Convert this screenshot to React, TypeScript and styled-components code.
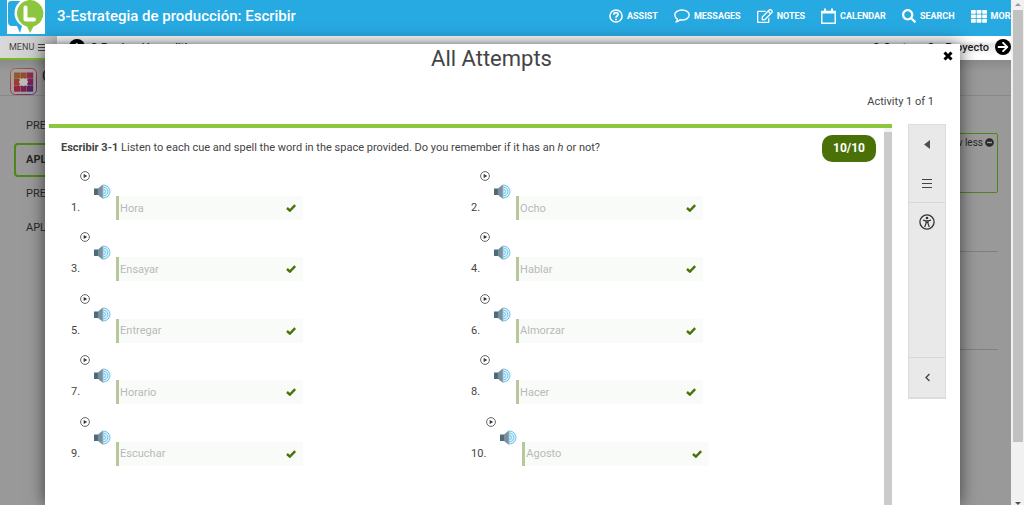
import React from "react";
import styled, { createGlobalStyle } from "styled-components";
import { FaChevronLeft, FaRegEdit, FaSearch, FaArrowLeft, FaArrowRight, FaMinusCircle } from "react-icons/fa";

const Global = createGlobalStyle`
  * { box-sizing: border-box; }
  body { margin: 0; font-family: Roboto, "Liberation Sans", sans-serif; color: #444; overflow: hidden; }
  button { font: inherit; color: inherit; background: none; border: 0; padding: 0; display: flex; align-items: center; cursor: pointer; }
  a { color: inherit; text-decoration: none; }
  h1, h2, p { margin: 0; font-weight: 400; }
  ul, ol { list-style: none; margin: 0; padding: 0; }
  svg { display: block; flex-shrink: 0; }
`;

const Shell = styled.div`
  display: flex;
  height: 100vh;
`;

const Page = styled.div`
  position: relative;
  flex: 1;
  min-width: 0;
  display: flex;
  flex-direction: column;
  overflow: hidden;
`;

const ScrollTrack = styled.div`
  width: 13px;
  background: #f1f1f1;
  display: flex;
  flex-direction: column;
  align-items: center;
  justify-content: space-between;
  padding: 3px 0 0;
`;

const ScrollThumb = styled.div`
  width: 10px;
  height: 86%;
  margin: 4px 0 auto;
  background: #c1c1c1;
`;

const TopBar = styled.header`
  height: 36px;
  flex-shrink: 0;
  background: #27a9e1;
  color: #fff;
  display: flex;
  align-items: flex-start;
  padding-left: 7px;
`;

const CourseTitle = styled.h1`
  font-size: 15px;
  font-weight: 400;
  line-height: 32px;
  margin-left: 12px;
  flex: 1;
  white-space: nowrap;
  && { font-weight: 500; }
`;

const Tools = styled.nav`
  display: flex;
  gap: 16px;
  width: 402px;
  overflow: hidden;
`;

const Tool = styled.button`
  height: 32px;
  gap: 4px;
  flex-shrink: 0;
  && { font-size: 9px; font-weight: 700; }
`;

const SubBar = styled.div`
  height: 24px;
  flex-shrink: 0;
  background: linear-gradient(#fff, #fff 20%, #e4e4e4 36%, #fff 80%);
  display: flex;
  color: #222;
`;

const MenuButton = styled.button`
  width: 57px;
  flex-shrink: 0;
  && {
    background: linear-gradient(90deg, #dadada, #c4c4c4);
    padding-left: 9px;
    gap: 4px;
    font-size: 9px;
    border-bottom: 2px solid #76b82a;
    color: #444;
  }
`;

const Steps = styled.div`
  flex: 1;
  display: flex;
  align-items: center;
  justify-content: space-between;
  padding: 0 0 2px 12px;
`;

const Step = styled.a`
  display: flex;
  align-items: center;
  gap: 6px;
  font-size: 11px;
  font-weight: 500;
`;

const Disc = styled.span`
  width: 16px;
  height: 16px;
  border-radius: 50%;
  background: #000;
  color: #fff;
  display: flex;
  align-items: center;
  justify-content: center;
`;

const Backdrop = styled.div`
  flex: 1;
  background: linear-gradient(#8a8a8a, #999 12px);
  color: #282828;
`;

const CourseRow = styled.div`
  display: flex;
  height: 36px;
  gap: 5px;
  padding: 8px 0 0 10px;
  font-size: 14px;
  font-weight: 500;
  border-bottom: 1px solid #898989;
`;

const Columns = styled.div`
  display: flex;
  justify-content: space-between;
`;

const SideList = styled.ul`
  width: 180px;
  padding: 13px 0 0 14px;
  font-size: 11px;
`;

const SideItem = styled.li<{ $active?: boolean }>`
  height: 34px;
  line-height: 30px;
  padding-left: 10px;
  border: 2px solid ${(p) => (p.$active ? "#4f8519" : "transparent")};
  border-radius: 4px;
  font-weight: ${(p) => (p.$active ? 700 : 400)};
`;

const Detail = styled.section`
  width: 500px;
  padding: 37px 13px 0 0;
`;

const Card = styled.div`
  height: 60px;
  border: 1px solid #4f8519;
  border-radius: 2px;
  display: flex;
  justify-content: flex-end;
  padding: 3px;
  font-size: 10px;
`;

const LessButton = styled.button`
  && { gap: 2px; align-self: flex-start; }
`;

const Rule = styled.hr<{ $gap: number }>`
  border: 0;
  border-top: 1px solid #808080;
  margin: ${(p) => p.$gap}px 0 0;
`;

const Modal = styled.div`
  position: absolute;
  top: 44px;
  right: 51px;
  bottom: 0;
  left: 45px;
  background: #fff;
  box-shadow: 0 0 16px rgba(0, 0, 0, 0.6);
  padding: 0 14px 0 4px;
  display: flex;
  flex-direction: column;
`;

const ModalHead = styled.div`
  height: 80px;
  flex-shrink: 0;
  padding-right: 12px;
`;

const ModalTitle = styled.h2`
  font-size: 22px;
  line-height: 30px;
  text-align: center;
`;

const Counter = styled.p`
  font-size: 11px;
  line-height: 16px;
  text-align: right;
  margin-top: 20px;
`;

const CloseButton = styled.button`
  position: absolute;
  top: 7px;
  right: 7px;
  && { color: #000; }
`;

const ModalBody = styled.div`
  flex: 1;
  min-height: 0;
  display: flex;
  gap: 16px;
`;

const Sheet = styled.div`
  flex: 1;
  min-width: 0;
  border-top: 4px solid #8cc63f;
  display: flex;
  align-items: stretch;
`;

const Activity = styled.div`
  flex: 1;
  min-width: 0;
  padding: 7px 8px 0 12px;
`;

const InnerScroll = styled.div`
  width: 8px;
  border-top: 4px solid #f4f4f4;
  background: #cbcbcb;
`;

const Intro = styled.div`
  display: flex;
  justify-content: space-between;
  font-size: 11px;
  line-height: 25px;
`;

const Score = styled.span`
  background: #4a7107;
  color: #fff;
  font-size: 12px;
  font-weight: 700;
  line-height: 27px;
  height: 27px;
  width: 54px;
  text-align: center;
  border-radius: 10px;
`;

const Questions = styled.ol`
  display: grid;
  grid-template-columns: 400px 1fr;
  grid-template-rows: repeat(5, 1fr);
  height: 316px;
  padding: 9px 0 0 10px;
`;

const Question = styled.li`
  display: flex;
  align-items: flex-start;
  font-size: 11px;
`;

const Num = styled.label`
  line-height: 16px;
  margin-top: 29px;
`;

const PlayButton = styled.button``;

const SoundButton = styled.button`
  && { margin: 13px 5px 0 4px; }
`;

const Field = styled.div`
  margin-top: 25px;
  width: 187px;
  height: 24px;
  background: #f9fbf8;
  border-left: 3px solid #b5c99a;
  display: flex;
  align-items: center;
  padding: 0 7px 0 1px;
`;

const Answer = styled.input`
  flex: 1;
  min-width: 0;
  border: 0;
  padding: 0;
  background: none;
  font: 11px Roboto, "Liberation Sans", sans-serif;
  color: #b9b9b9;
`;

const Rail = styled.aside`
  align-self: flex-start;
  width: 38px;
  height: 275px;
  background: #e9e9e9;
  border: 1px solid #dcdcdc;
  border-bottom-width: 2px;
  display: flex;
  flex-direction: column;
`;

const RailButton = styled.button<{ $h: number; $line?: boolean; $push?: boolean }>`
  && {
    justify-content: center;
    height: ${(p) => p.$h}px;
    margin-top: ${(p) => (p.$push ? "auto" : "0")};
    border-top: 1px solid ${(p) => (p.$line ? "#d6d6d6" : "transparent")};
  }
`;

const Logo = () => (
  <svg width="38" height="34" viewBox="0 0 38 34">
    <path d="M0 0h38v34H0z" fill="#fff" />
    <path d="M4 1h18v25h-7l-2 7-3-7H5q-4 0-4-4V4q0-3 3-3z" fill="#27a9e1" />
    <circle cx="22.500" cy="13" r="15" fill="#fff" />
    <path d="M22.500 0a13.500 13.500 0 0 1 4 26.500L23 33l-3-6.500A13.500 13.500 0 0 1 22.500 0z" fill="#8cc63f" />
    <path d="M18.500 7.500v12h8.500" fill="none" stroke="#fff" strokeWidth="4" strokeLinejoin="round" strokeLinecap="round" />
  </svg>
);

const Help = () => (
  <svg width="14" height="14" viewBox="0 0 14 14" fill="none" stroke="#fff" strokeWidth="1.500">
    <circle cx="7" cy="7" r="6.100" />
    <path d="M4.900 5.600C5 3 9.200 3.100 9.100 5.500 9 7 7 6.900 7 8.700M7 9.700v1.500" strokeWidth="1.800" />
  </svg>
);

const Bubble = () => (
  <svg width="16" height="14" viewBox="0 0 16 14" fill="none" stroke="#fff" strokeWidth="1.400" strokeLinejoin="round">
    <path d="M8 1c4 0 7.200 2.200 7.200 5S12 11 8 11q-1 0-2-.2Q4.500 12.600 2 13q1.400-1.300 1.400-3Q.8 8.500.8 6C.8 3.200 4 1 8 1z" />
  </svg>
);

const Calendar = () => (
  <svg width="15" height="16" viewBox="0 0 15 16" fill="none" stroke="#fff">
    <path d="M.8 3.500h13.400v11.700H.8z" strokeWidth="1.400" />
    <path d="M.8 4.500h13.400" strokeWidth="2" />
    <path d="M4 .5v4M11 .5v4" strokeWidth="2" />
  </svg>
);

const Grid = () => (
  <svg width="16" height="13" viewBox="0 0 16 13" fill="#fff">
    {[0, 4.500, 9].map((y) => [0, 5.600, 11.200].map((x) => <rect key={`${x}-${y}`} x={x} y={y} width="4.800" height="3.700" rx=".4" />))}
  </svg>
);

const Bars = () => (
  <svg width="10" height="9" viewBox="0 0 10 9" stroke="#444">
    <path d="M0 .5h10M0 4.500h10M0 8.500h10" />
  </svg>
);

const MenuBars = () => (
  <svg width="10" height="7" viewBox="0 0 10 7" stroke="#444">
    <path d="M0 .5h10M0 3.500h10M0 6.500h10" />
  </svg>
);

const pieces = [
  ["#8f5a2c", "#9c4a2c", "#8a2a52"],
  ["#9c3a30", "#999", "#7a2252"],
  ["#96243c", "#7c2248", "#522462"],
];

const Puzzle = () => (
  <svg width="27" height="27" viewBox="0 0 27 27">
    <defs>
      <linearGradient id="frame" x1="0" y1="0" x2="1" y2="1">
        <stop offset="0" stopColor="#a8653a" />
        <stop offset=".5" stopColor="#9c3550" />
        <stop offset="1" stopColor="#5e3270" />
      </linearGradient>
    </defs>
    <rect x=".5" y=".5" width="26" height="26" rx="5" fill="#a0a0a0" stroke="url(#frame)" />
    {pieces.map((row, r) => row.map((fill, c) => (
      <rect key={`${r}-${c}`} x={4 + c * 6.500} y={4.500 + r * 6.500} width="6.200" height="6.200" fill={fill} />
    )))}
    <path d="M9.300 10.200l2.700.8q1.500-2.200 3 0l2.700-.8-.6 2.400q2.200 1.400 0 2.800l.6 2.600-2.700-.8q-1.500 2.200-3 0l-2.700.8.6-2.600q-2.200-1.400 0-2.800z" fill="#bbb" />
  </svg>
);

const Cross = () => (
  <svg width="10" height="10" viewBox="0 0 10 10">
    <path d="M1.500 1.500l7 7M8.500 1.500l-7 7" stroke="#000" strokeWidth="3" />
  </svg>
);

const Tick = () => (
  <svg width="10" height="8" viewBox="0 0 10 8">
    <path d="M1 4L3.900 6.600 9.200 1.200" fill="none" stroke="#4a7107" strokeWidth="2.400" />
  </svg>
);

const Play = () => (
  <svg width="10" height="10" viewBox="0 0 10 10">
    <circle cx="5" cy="5" r="4.400" fill="none" stroke="#555" strokeWidth=".9" />
    <path d="M3.700 2.900L7.200 5 3.700 7.100z" fill="#333" />
  </svg>
);

const Speaker = () => (
  <svg width="17" height="15" viewBox="0 0 17 15">
    <path d="M0 4.500h4v6.500H0z" fill="#4f6b7a" />
    <path d="M4 4.500L8.500.8v13.800L4 11z" fill="#7891a0" />
    <path d="M8.500.8h1v13.800h-1z" fill="#607d8b" />
    <path d="M9.500 1a6.500 6.500 0 0 1 0 13z" fill="#d9f0fc" />
    <g fill="none" stroke="#6fc6f0">
      <path d="M9.500 1a6.500 6.500 0 0 1 0 13" />
      <path d="M9.500 3.200a4.300 4.300 0 0 1 0 8.600" />
      <path d="M9.500 5.500a2 2 0 0 1 0 4" />
    </g>
  </svg>
);

const Access = () => (
  <svg width="16" height="16" viewBox="0 0 16 16" fill="none" stroke="#333">
    <circle cx="8" cy="8" r="7.100" strokeWidth="1.300" />
    <circle cx="8" cy="4" r="1.300" fill="#333" stroke="none" />
    <path d="M4 6.200l2.800.7h2.400l2.800-.7M7 7v2.500L5.700 13M9 7v2.500l1.300 3.500M7 8.500h2" strokeWidth="1.200" />
  </svg>
);

const Arrowhead = () => (
  <svg width="6" height="9" viewBox="0 0 6 9"><path d="M6 0v9L0 4.500z" fill="#505050" /></svg>
);

const answers = ["Hora", "Ocho", "Ensayar", "Hablar", "Entregar", "Almorzar", "Horario", "Hacer", "Escuchar", "Agosto"];

const tools = [
  { label: "ASSIST", icon: <Help /> },
  { label: "MESSAGES", icon: <Bubble /> },
  { label: "NOTES", icon: <FaRegEdit size={16} /> },
  { label: "CALENDAR", icon: <Calendar /> },
  { label: "SEARCH", icon: <FaSearch size={14} /> },
  { label: "MORE", icon: <Grid /> },
];

export default function App() {
  return (
    <Shell>
      <Global />
      <Page>
        <TopBar>
          <Logo />
          <CourseTitle>3-Estrategia de producción: Escribir</CourseTitle>
          <Tools>
            {tools.map((t) => <Tool key={t.label}>{t.icon}{t.label}</Tool>)}
          </Tools>
        </TopBar>
        <SubBar>
          <MenuButton>MENU <MenuBars /></MenuButton>
          <Steps>
            <Step href="#prev"><Disc><FaArrowLeft size={10} /></Disc>2-Producción auditiva</Step>
            <Step href="#next">3-Contraseña: Proyecto <Disc><FaArrowRight size={12} /></Disc></Step>
          </Steps>
        </SubBar>
        <Backdrop>
          <CourseRow><Puzzle />C</CourseRow>
          <Columns>
            <SideList>
              <SideItem>PRE</SideItem>
              <SideItem $active>APL</SideItem>
              <SideItem>PRE</SideItem>
              <SideItem>APL</SideItem>
            </SideList>
            <Detail>
              <Card><LessButton>Show less <FaMinusCircle size={9} /></LessButton></Card>
              <Rule $gap={58} />
              <Rule $gap={97} />
            </Detail>
          </Columns>
        </Backdrop>

        <Modal role="dialog" aria-label="All Attempts">
          <ModalHead>
            <ModalTitle>All Attempts</ModalTitle>
            <Counter>Activity 1 of 1</Counter>
          </ModalHead>
          <CloseButton aria-label="Close"><Cross /></CloseButton>
          <ModalBody>
            <Sheet>
              <Activity>
                <Intro>
                  <p><b>Escribir 3-1</b> Listen to each cue and spell the word in the space provided. Do you remember if it has an <i>h</i> or not?</p>
                  <Score>10/10</Score>
                </Intro>
                <Questions>
                  {answers.map((a, i) => (
                    <Question key={a}>
                      <Num htmlFor={`answer-${i}`}>{i + 1}.</Num>
                      <PlayButton aria-label="Play"><Play /></PlayButton>
                      <SoundButton aria-label="Listen"><Speaker /></SoundButton>
                      <Field>
                        <Answer id={`answer-${i}`} defaultValue={a} readOnly />
                        <Tick />
                      </Field>
                    </Question>
                  ))}
                </Questions>
              </Activity>
              <InnerScroll />
            </Sheet>
            <Rail>
              <RailButton $h={38} aria-label="Previous"><Arrowhead /></RailButton>
              <RailButton $h={39} aria-label="Contents"><Bars /></RailButton>
              <RailButton $h={39} $line aria-label="Accessibility"><Access /></RailButton>
              <RailButton $h={40} $line $push aria-label="Collapse"><FaChevronLeft size={9} /></RailButton>
            </Rail>
          </ModalBody>
        </Modal>
      </Page>
      <ScrollTrack aria-hidden="true">
        <svg width="6" height="3" viewBox="0 0 6 3"><path d="M3 0l3 3H0z" fill="#999" /></svg>
        <ScrollThumb />
        <svg width="6" height="3" viewBox="0 0 6 3"><path d="M3 3l3-3H0z" fill="#505050" /></svg>
      </ScrollTrack>
    </Shell>
  );
}
